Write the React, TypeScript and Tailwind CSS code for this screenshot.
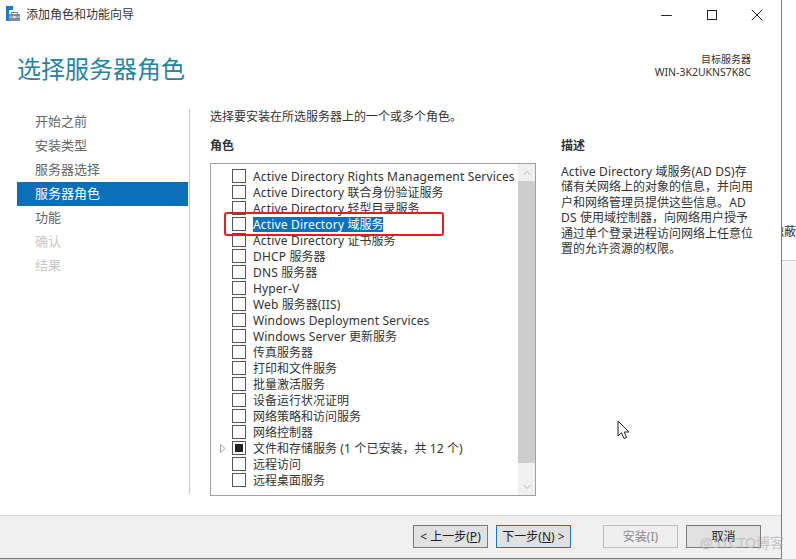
import React from 'react';
import { Minus, X, ChevronUp, ChevronDown } from 'lucide-react';

const NAV = [
  { label: '开始之前', state: 'normal' },
  { label: '安装类型', state: 'normal' },
  { label: '服务器选择', state: 'normal' },
  { label: '服务器角色', state: 'active' },
  { label: '功能', state: 'normal' },
  { label: '确认', state: 'disabled' },
  { label: '结果', state: 'disabled' },
];

const ROLES = [
  'Active Directory Rights Management Services',
  'Active Directory 联合身份验证服务',
  'Active Directory 轻型目录服务',
  'Active Directory 域服务',
  'Active Directory 证书服务',
  'DHCP 服务器',
  'DNS 服务器',
  'Hyper-V',
  'Web 服务器(IIS)',
  'Windows Deployment Services',
  'Windows Server 更新服务',
  '传真服务器',
  '打印和文件服务',
  '批量激活服务',
  '设备运行状况证明',
  '网络策略和访问服务',
  '网络控制器',
  '文件和存储服务 (1 个已安装，共 12 个)',
  '远程访问',
  '远程桌面服务',
];

const FONT = "font-['Noto_Sans','Noto_Sans_CJK_SC',sans-serif]";

// latin runs are a bit narrower than Segoe UI, the CJK ones are already right
const Wide = ({ text }: { text: string }) => (
  <>
    {text.split(/([\u4e00-\u9fff，]+)/).map((part, i) =>
      i % 2 === 0 ? (
        <span key={i} className="tracking-[0.16px]">
          {part}
        </span>
      ) : (
        <span key={i}>{part}</span>
      ),
    )}
  </>
);

const AppIcon = () => (
  <svg width="16" height="16" viewBox="0 0 16 16" className="mb-[2px] shrink-0">
    <rect x="0" y="0" width="7" height="4" fill="#1c7cc4" />
    <rect x="0" y="4" width="3" height="11" fill="#1c7cc4" />
    <path d="M5.5 8 V6.5 H11.5 V8" fill="none" stroke="#6b7f8c" strokeWidth="1" />
    <rect x="3" y="8" width="11" height="7" fill="#7d8f9b" />
    <rect x="3" y="10.5" width="11" height="1" fill="#c9d3d9" />
    <rect x="7.5" y="10" width="2" height="2" fill="#eef2f4" />
  </svg>
);

const Cursor = () => (
  <svg width="14" height="21" viewBox="0 0 14 21" className="absolute left-[617px] top-[420px]">
    <path d="M1 1 V16 L4.5 12.8 L7 18.5 L9.6 17.4 L7.2 12 H12 Z" fill="#fff" stroke="#222" strokeWidth="1" />
  </svg>
);

const WizardButton = ({ children, tone = 'normal' }: { children: React.ReactNode; tone?: string }) => {
  const toneClass =
    tone === 'primary'
      ? 'border-[#1a76b8] bg-[#e1e1e1] text-[#222]'
      : tone === 'disabled'
        ? 'border-[#bfbfbf] bg-[#efefef] text-[#8a8a8a]'
        : 'border-[#7a7a7a] bg-[#e1e1e1] text-[#222]';
  return (
    <div className={`flex h-[23px] w-[75px] items-center justify-center border text-[12px] ${toneClass}`}>
      {children}
    </div>
  );
};

const App: React.FC = () => {
  return (
    <div className={`relative flex h-[559px] w-[796px] overflow-hidden bg-white ${FONT}`}>
      {/* Window */}
      <div className="flex w-[782px] shrink-0 flex-col border-r border-b border-[#7d7d7d]">
        <div className="flex h-[30px] items-center pl-[6px] text-[12px] text-[#333]">
          <AppIcon />
          <span className="ml-[4px]">添加角色和功能向导</span>
          <div className="ml-auto flex items-center pr-[2px] text-[#222]">
            <div className="flex w-[45px] justify-center">
              <Minus size={17} strokeWidth={1.4} />
            </div>
            <div className="flex w-[45px] justify-center">
              <div className="h-[10px] w-[10px] border border-[#222]" />
            </div>
            <div className="flex w-[45px] justify-center">
              <X size={20} strokeWidth={1.2} />
            </div>
          </div>
        </div>

        <div className="flex h-[79px] items-start justify-between pl-[17px] pr-[30px] pt-[20px]">
          <h1 className="text-[24px] leading-[38px] font-normal text-[#2583a4]">选择服务器角色</h1>
          <div className="mt-[3px] text-right text-[10px] leading-[13px] text-[#333]">
            <div>目标服务器</div>
            <div className="text-[10.5px]">WIN-3K2UKNS7K8C</div>
          </div>
        </div>

        <div className="flex flex-1">
          {/* Nav */}
          <div className="ml-[17px] h-[385px] w-[173px] shrink-0 border-r border-[#c8c8c8] pt-[1px]">
            {NAV.map((item) => (
              <div
                key={item.label}
                className={`flex h-[24px] items-center pl-[18px] text-[13px] ${
                  item.state === 'active'
                    ? 'mr-[1px] bg-[#0a70b8] text-white'
                    : item.state === 'disabled'
                      ? 'text-[#c8c8c8]'
                      : 'text-[#666]'
                }`}
              >
                {item.label}
              </div>
            ))}
          </div>

          {/* Main */}
          <div className="ml-[20px] flex flex-1 flex-col">
            <p className="text-[12px] leading-[16px] text-[#333]">选择要安装在所选服务器上的一个或多个角色。</p>
            <div className="mt-[13px] flex">
              <div className="w-[325px] shrink-0">
                <div className="text-[12px] leading-[16px] font-bold text-[#333]">角色</div>
                <div className="mt-[9px] flex h-[333px] w-[326px] border border-[#a0a0a0]">
                  <div className="flex-1 pt-[4px]">
                    {ROLES.map((role, i) => (
                      <div key={role} className="flex h-[16px] items-center text-[12px] text-[#333]">
                        <div className="flex w-[21px] justify-end">
                          {i === 17 && (
                            <svg width="6" height="9" viewBox="0 0 6 9" className="mr-[6px]">
                              <path d="M.5 .5 L5 4.5 L.5 8.5 Z" fill="none" stroke="#a6a6a6" />
                            </svg>
                          )}
                        </div>
                        <div className="flex h-[14px] w-[14px] shrink-0 items-center justify-center border border-[#555] bg-white">
                          {i === 17 && <div className="h-[8px] w-[8px] bg-[#222]" />}
                        </div>
                        <span
                          className={`ml-[7px] whitespace-nowrap leading-[15px] ${
                            i === 3 ? 'bg-[#0a70c0] text-white' : ''
                          }`}
                        >
                          <Wide text={role} />
                        </span>
                      </div>
                    ))}
                  </div>
                  {/* Scrollbar */}
                  <div className="flex w-[17px] shrink-0 flex-col bg-[#f0f0f0] text-[#a6a6a6]">
                    <div className="flex h-[17px] items-center justify-center">
                      <ChevronUp size={12} strokeWidth={1.5} />
                    </div>
                    <div className="h-[282px] bg-[#cdcdcd]" />
                    <div className="mt-auto flex h-[17px] items-center justify-center">
                      <ChevronDown size={12} strokeWidth={1.5} />
                    </div>
                  </div>
                </div>
              </div>

              <div className="ml-[26px] w-[195px]">
                <div className="text-[12px] leading-[16px] font-bold text-[#333]">描述</div>
                <div className="mt-[10px] whitespace-nowrap text-[12px] leading-[15.4px] text-[#333]">
                  <div>
                    <Wide text="Active Directory 域服务(AD DS)存" />
                  </div>
                  <div>储有关网络上的对象的信息，并向用</div>
                  <div>
                    <Wide text="户和网络管理员提供这些信息。AD" />
                  </div>
                  <div>
                    <Wide text="DS 使用域控制器，向网络用户授予" />
                  </div>
                  <div>通过单个登录进程访问网络上任意位</div>
                  <div>置的允许资源的权限。</div>
                </div>
              </div>
            </div>
          </div>
        </div>

        {/* Footer */}
        <div className="flex h-[43px] shrink-0 items-center justify-end border-t border-[#d9d9d9] bg-[#f0f0f0] pb-[1px] pr-[20px]">
          <WizardButton>
            &lt; 上一步(<u>P</u>)
          </WizardButton>
          <div className="ml-[8px]">
            <WizardButton tone="primary">
              下一步(<u>N</u>) &gt;
            </WizardButton>
          </div>
          <div className="ml-[32px]">
            <WizardButton tone="disabled">安装(I)</WizardButton>
          </div>
          <div className="ml-[8px]">
            <WizardButton>取消</WizardButton>
          </div>
        </div>
      </div>

      {/* Neighbouring window showing at the right */}
      <div className="flex min-w-0 flex-1 flex-col">
        <div className="mt-[224px] flex h-[16px] justify-end overflow-hidden whitespace-nowrap text-[12px] leading-[16px] text-[#333]">
          <span className="shrink-0">触蔽</span>
        </div>
        <div className="mt-[20px] flex-1 border-t border-[#d0d0d0] bg-[#f5f5f5]" />
      </div>

      {/* Annotation over the selected row */}
      <div className="absolute left-[224px] top-[212px] h-[24px] w-[220px] rounded-[3px] border-2 border-[#e02020]" />
      <Cursor />

      {/* Watermark */}
      <div className="absolute left-[700px] top-[533px] text-[14px] leading-[20px] text-[#b8b8b8]/80">@51CTO博客</div>
    </div>
  );
};

export default App;
